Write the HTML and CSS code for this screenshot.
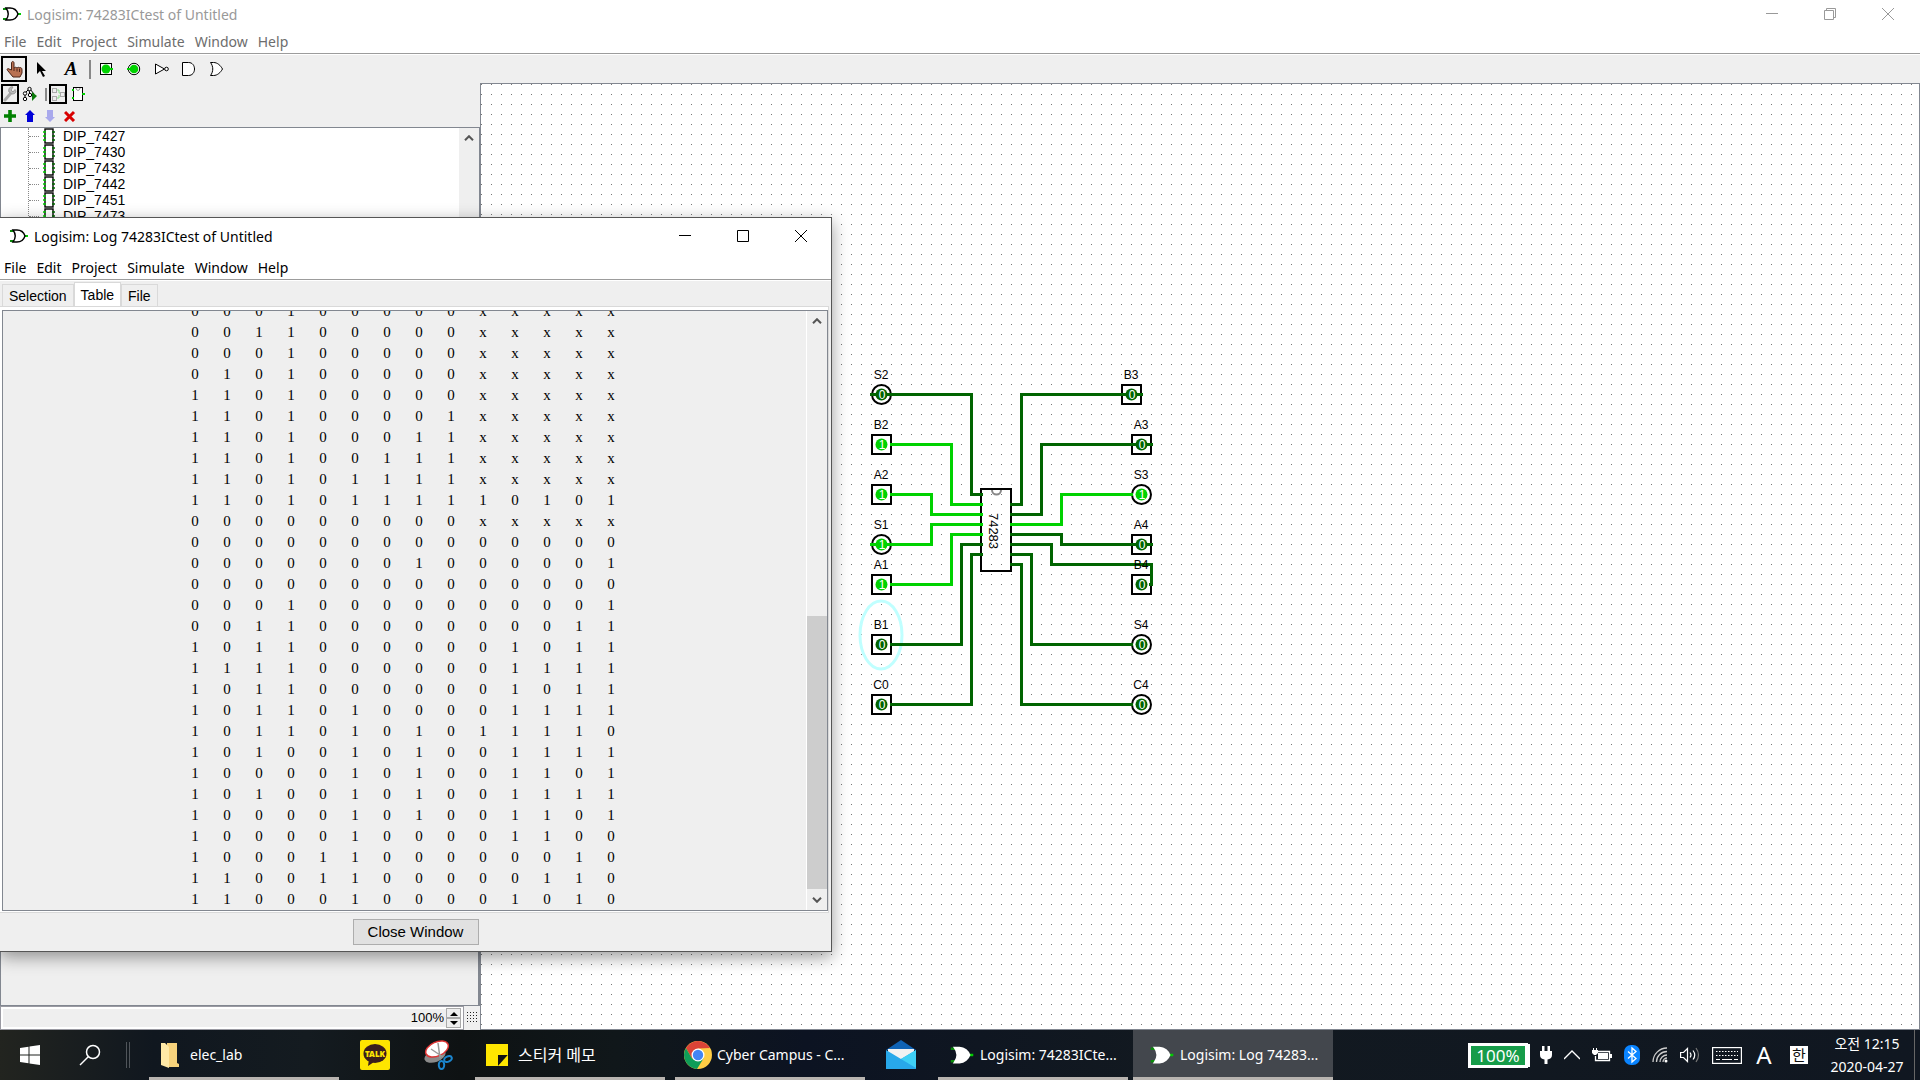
FILE: index.html
```html
<!DOCTYPE html>
<html lang="ko">
<head>
<meta charset="utf-8">
<title>Logisim: 74283ICtest of Untitled</title>
<link rel="stylesheet" href="styles.css">
</head>
<body>
<svg class="defs" aria-hidden="true">
  <defs>
    <symbol id="gate" viewBox="0 0 20 16">
      <path d="M1 3h5M1 13h5" stroke="#0a8a0a" stroke-width="2"/>
      <path d="M15 8h4" stroke="#0c0" stroke-width="2"/>
      <path d="M4 2h4c4 0 7 3 8 6-1 3-4 6-8 6H4c3-4 3-8 0-12z" fill="#fff" stroke="currentColor" stroke-width="1.4"/>
    </symbol>
    <symbol id="dip" viewBox="0 0 12 16">
      <rect x="2" y="1" width="8" height="14" fill="#fff" stroke="#000" stroke-width="1.4"/>
      <path d="M0 4h3M0 8h3M0 12h3" stroke="#0c0" stroke-width="1.4"/>
      <path d="M9 4h3M9 8h3M9 12h3" stroke="#060" stroke-width="1.4"/>
    </symbol>
    <symbol id="arrow-up" viewBox="0 0 10 6"><path d="M1 5.2l4-4 4 4" fill="none" stroke="#555" stroke-width="2"/></symbol>
  </defs>
</svg>

<div class="desktop">
  <main class="app">
    <header class="titlebar inactive">
      <svg class="gate"><use href="#gate"/></svg>
      <h1>Logisim: 74283ICtest of Untitled</h1>
      <div class="controls">
        <button aria-label="Minimize"><svg viewBox="0 0 12 12"><path d="M0 5.500h12"/></svg></button>
        <button aria-label="Restore"><svg viewBox="0 0 12 12"><path d="M.5 2.5h9v9h-9zM2.500 2.500v-2h9v9h-2"/></svg></button>
        <button aria-label="Close"><svg viewBox="0 0 12 12"><path d="M0 0l12 12M12 0L0 12"/></svg></button>
      </div>
    </header>
    <nav class="menubar inactive">
      <button>File</button><button>Edit</button><button>Project</button><button>Simulate</button><button>Window</button><button>Help</button>
    </nav>
    <div class="toolbar">
      <button class="pressed" aria-label="Poke"><svg viewBox="0 0 20 20"><path d="M7.500 11V4c0-2 2.500-2 2.500 0v5c1-1 2-1 3 0 1-1 2-1 2 0 2-1 3 0 3 2v3l-2 4H9l-5-6c-2-2 0-3 1-2z" fill="#b97152" stroke="#4a2418"/><path d="M10 9v3M13 9.500v3M15.500 10v3" stroke="#4a2418"/></svg></button>
      <button aria-label="Edit"><svg viewBox="0 0 20 20"><path d="M6 3v12l3-3 3 6 2-1-3-5h4z" fill="#000"/></svg></button>
      <button class="text-tool" aria-label="Text">A</button>
      <span class="sep"></span>
      <button aria-label="Input pin"><svg viewBox="0 0 20 20"><rect x="4.500" y="4.500" width="11" height="11" fill="#fff" stroke="#000"/><circle cx="10" cy="10" r="4.500" fill="#00d200"/><path d="M10 10h7" stroke="#00d200" stroke-width="2"/></svg></button>
      <button aria-label="Output pin"><svg viewBox="0 0 20 20"><circle cx="10" cy="10" r="5.700" fill="#fff" stroke="#000"/><circle cx="10" cy="10" r="4.300" fill="#00d200"/><path d="M3 10h7" stroke="#00d200" stroke-width="2"/></svg></button>
      <button aria-label="NOT gate"><svg viewBox="0 0 20 20"><path d="M3.500 5v10l9-5z" fill="#fff" stroke="#000"/><circle cx="14.500" cy="10" r="1.800" fill="#fff" stroke="#000"/></svg></button>
      <button aria-label="AND gate"><svg viewBox="0 0 20 20"><path d="M2.500 3.500h6c8 0 8 13 0 13h-6z" fill="#fff" stroke="#000"/></svg></button>
      <button aria-label="OR gate"><svg viewBox="0 0 20 20"><path d="M2.500 3.500h3c4 0 7 3 9 6.500-2 3.500-5 6.500-9 6.500h-3c3-4 3-9 0-13z" fill="#fff" stroke="#000"/></svg></button>
    </div>
    <div class="workspace">
      <aside class="explorer">
        <div class="toolrow">
          <button class="pressed" aria-label="Toolbox"><svg viewBox="0 0 14 16"><path d="M2 14l6-7" stroke="#aaa" stroke-width="3" stroke-linecap="round"/><path d="M12 3.500L10 6 8 4l2-3c-3-1-5 2-4 5l3 2c3 0 5-2 3-4.500z" fill="#bbb" stroke="#999"/></svg></button>
          <button aria-label="Simulation tree"><svg viewBox="0 0 16 16"><path d="M7 3L3 7v5M8 3l4 5M7 4l1 5" stroke="#000" fill="none"/><g fill="#fff" stroke="#000"><circle cx="7.500" cy="3" r="1.700"/><circle cx="3" cy="7.500" r="1.700"/><circle cx="3" cy="13" r="1.700"/><circle cx="8" cy="9" r="1.700"/></g><path d="M10 6l5 4-5 5z" fill="#0a7a0a"/></svg></button>
          <span class="sep"></span>
          <button class="pressed" aria-label="Edit layout"><svg viewBox="0 0 14 16"><path d="M5 4h3v3h2M5 12h3V9" stroke="#8d8" fill="none"/><g fill="#eee" stroke="#aaa"><rect x="1.500" y="2.500" width="4" height="4"/><rect x="1.500" y="10.500" width="4" height="4"/><rect x="9.500" y="6.500" width="4" height="4"/></g></svg></button>
          <button aria-label="Edit appearance"><svg viewBox="0 0 14 16"><rect x="2.500" y="1.500" width="9" height="13" fill="#fff" stroke="#000"/><path d="M5 2c0 3 4 3 4 0" fill="none" stroke="#888"/><path d="M1 4h2M1 12h2M11 8h3" stroke="#0c0" stroke-width="2"/></svg></button>
        </div>
        <div class="toolrow edits">
          <button aria-label="Add circuit"><svg viewBox="0 0 12 12"><path d="M6 0v12M0 6h12" stroke="#008000" stroke-width="3.600"/></svg></button>
          <button aria-label="Move up"><svg viewBox="0 0 12 12"><path d="M6 0l5 5H9v7H3V5H1z" fill="#0000d8"/></svg></button>
          <button aria-label="Move down"><svg viewBox="0 0 12 12"><path d="M6 12l5-5H9V0H3v7H1z" fill="#a8a8ec"/></svg></button>
          <button aria-label="Delete circuit"><svg viewBox="0 0 12 12"><path d="M1 2l9 9M10 2l-9 9" stroke="#d80000" stroke-width="3"/></svg></button>
        </div>
        <div class="tree">
          <ul>
            <li><svg><use href="#dip"/></svg>DIP_7427</li>
            <li><svg><use href="#dip"/></svg>DIP_7430</li>
            <li><svg><use href="#dip"/></svg>DIP_7432</li>
            <li><svg><use href="#dip"/></svg>DIP_7442</li>
            <li><svg><use href="#dip"/></svg>DIP_7451</li>
            <li><svg><use href="#dip"/></svg>DIP_7473</li>
          </ul>
          <div class="tree-scroll"><svg class="chev"><use href="#arrow-up"/></svg></div>
        </div>
        <div class="attributes"></div>
        <div class="zoom">
          <div class="zoom-box">
            <input type="text" value="100%" aria-label="Zoom">
            <div class="spin">
              <button aria-label="Zoom in"><svg viewBox="0 0 8 5"><path d="M0 5l4-4 4 4z"/></svg></button>
              <button aria-label="Zoom out"><svg viewBox="0 0 8 5"><path d="M0 0l4 4 4-4z"/></svg></button>
            </div>
          </div>
          <button class="grid-toggle" aria-label="Show grid"></button>
        </div>
      </aside>
      <section class="canvas">
        <svg class="circuit" aria-label="74283 circuit">
          <defs>
            <pattern id="dots" width="10" height="10" patternUnits="userSpaceOnUse"><rect width="1" height="1" fill="#777"/></pattern>
            <g id="sq"><rect x="-9.500" y="-9.500" width="19" height="19"/></g>
            <g id="ci"><circle r="9.500"/></g>
          </defs>
          <rect width="100%" height="100%" fill="url(#dots)"/>
          <!-- coordinates are window coordinates; the sheet starts at 481,84 -->
          <g transform="translate(-481 -84)">
            <g class="outline">
              <use href="#ci" x="881.5" y="394.5"/><use href="#sq" x="881.5" y="444.5"/><use href="#sq" x="881.5" y="494.5"/>
              <use href="#ci" x="881.5" y="544.5"/><use href="#sq" x="881.5" y="584.5"/><use href="#sq" x="881.5" y="644.5"/><use href="#sq" x="881.5" y="704.5"/>
              <use href="#sq" x="1131.5" y="394.5"/><use href="#sq" x="1141.5" y="444.5"/><use href="#ci" x="1141.5" y="494.5"/>
              <use href="#sq" x="1141.5" y="544.5"/><use href="#sq" x="1141.5" y="584.5"/><use href="#ci" x="1141.5" y="644.5"/><use href="#ci" x="1141.5" y="704.5"/>
              <rect x="981" y="489" width="30" height="82"/>
            </g>
            <path d="M992 490a4 4 0 0 0 9 0" fill="none" stroke="#888" stroke-width="2"/>
            <ellipse cx="881" cy="635" rx="21" ry="34" fill="none" stroke="#c0ffff" stroke-width="3"/>
            <g class="wire low">
              <path d="M870 394.500h101.500v100H983"/>
              <path d="M890 644.500h71.500v-100H983"/>
              <path d="M890 704.500h81.500v-150H983"/>
              <path d="M1010 504.500h11.500v-110H1143"/>
              <path d="M1010 514.500h31.500v-70H1153"/>
              <path d="M1010 534.500h51.500v10H1153"/>
              <path d="M1010 544.500h41.500v20h100v20H1149"/>
              <path d="M1010 554.500h21.500v90H1133"/>
              <path d="M1010 564.500h11.500v140H1133"/>
            </g>
            <g class="wire high">
              <path d="M890 444.500h61.500v60H983"/>
              <path d="M890 494.500h41.500v20H983"/>
              <path d="M870 544.500h61.500v-20H983"/>
              <path d="M890 584.500h61.500v-50H983"/>
              <path d="M1010 524.500h51.500v-30H1133"/>
            </g>
            <g class="value-low">
              <circle cx="881.500" cy="394.500" r="6"/><circle cx="881.500" cy="644.500" r="6"/><circle cx="881.500" cy="704.500" r="6"/>
              <circle cx="1131.500" cy="394.500" r="6"/><circle cx="1141.500" cy="444.500" r="6"/><circle cx="1141.500" cy="544.500" r="6"/>
              <circle cx="1141.500" cy="584.500" r="6"/><circle cx="1141.500" cy="644.500" r="6"/><circle cx="1141.500" cy="704.500" r="6"/>
            </g>
            <g class="value-high">
              <circle cx="881.500" cy="444.500" r="6"/><circle cx="881.500" cy="494.500" r="6"/><circle cx="881.500" cy="544.500" r="6"/><circle cx="881.500" cy="584.500" r="6"/><circle cx="1141.500" cy="494.500" r="6"/>
            </g>
            <g class="digit">
              <text x="882" y="399">0</text><text x="882" y="449">1</text><text x="882" y="499">1</text><text x="882" y="549">1</text><text x="882" y="589">1</text><text x="882" y="649">0</text><text x="882" y="709">0</text>
              <text x="1132" y="399">0</text><text x="1142" y="449">0</text><text x="1142" y="499">1</text><text x="1142" y="549">0</text><text x="1142" y="589">0</text><text x="1142" y="649">0</text><text x="1142" y="709">0</text>
            </g>
            <g class="label">
              <text x="881" y="379">S2</text><text x="881" y="429">B2</text><text x="881" y="479">A2</text><text x="881" y="529">S1</text><text x="881" y="569">A1</text><text x="881" y="629">B1</text><text x="881" y="689">C0</text>
              <text x="1131" y="379">B3</text><text x="1141" y="429">A3</text><text x="1141" y="479">S3</text><text x="1141" y="529">A4</text><text x="1141" y="569">B4</text><text x="1141" y="629">S4</text><text x="1141" y="689">C4</text>
              <text class="chip-name" transform="translate(989 531) rotate(90)">74283</text>
            </g>
          </g>
        </svg>
      </section>
    </div>
  </main>

  <section class="log">
    <header class="titlebar">
      <svg class="gate"><use href="#gate"/></svg>
      <h2>Logisim: Log 74283ICtest of Untitled</h2>
      <div class="controls">
        <button aria-label="Minimize"><svg viewBox="0 0 12 12"><path d="M0 5.500h12"/></svg></button>
        <button aria-label="Maximize"><svg viewBox="0 0 12 12"><path d="M.5.5h11v11H.5z"/></svg></button>
        <button aria-label="Close"><svg viewBox="0 0 12 12"><path d="M0 0l12 12M12 0L0 12"/></svg></button>
      </div>
    </header>
    <nav class="menubar">
      <button>File</button><button>Edit</button><button>Project</button><button>Simulate</button><button>Window</button><button>Help</button>
    </nav>
    <div class="tabs" role="tablist">
      <button role="tab">Selection</button><button role="tab" class="current" aria-selected="true">Table</button><button role="tab">File</button>
    </div>
    <div class="pane">
      <div class="scrollpane">
        <div class="viewport"><table><tbody id="log-rows"></tbody></table></div>
        <div class="scrollbar">
          <svg class="chev"><use href="#arrow-up"/></svg>
          <div class="track"><div class="thumb"></div></div>
          <svg class="chev down"><use href="#arrow-up"/></svg>
        </div>
      </div>
    </div>
    <footer><button>Close Window</button></footer>
  </section>

  <footer class="taskbar">
    <button class="start" aria-label="Start"><svg width="20" height="20" viewBox="0 0 20 20"><path d="M0 3l8.500-1.200v7.700H0zM9.500 1.600L20 0v9.500H9.500zM0 10.500h8.500v7.700L0 17zM9.500 10.500H20V20L9.500 18.400z" fill="#fff"/></svg></button>
    <button class="start" aria-label="Search"><svg width="22" height="22" viewBox="0 0 22 22" fill="none" stroke="#fff" stroke-width="1.500"><circle cx="14" cy="8" r="6.500"/><path d="M9.500 12.500L1 21"/></svg></button>
    <span class="grip"></span>
    <button class="task"><svg width="20" height="28" viewBox="0 0 20 28"><path d="M7 2h10v20l2 1v3H7z" fill="#f7d37c"/><path d="M1 2h4l4 4v21l-8-3z" fill="#ffe9a6"/></svg><span>elec_lab</span></button>
    <button class="pin" aria-label="KakaoTalk"><svg width="30" height="30" viewBox="0 0 30 30"><rect width="30" height="30" rx="2" fill="#fee500"/><ellipse cx="15" cy="13.500" rx="11.500" ry="9.500" fill="#3a1d1d"/><path d="M9 19l-1 7 6-4z" fill="#3a1d1d"/><text x="15" y="17" text-anchor="middle" font-family="Noto Sans, sans-serif" font-weight="900" font-size="8" fill="#fee500">TALK</text></svg></button>
    <button class="pin" aria-label="Snipping Tool"><svg width="30" height="30" viewBox="0 0 30 30"><ellipse cx="12" cy="16" rx="11" ry="6" transform="rotate(-20 12 16)" fill="#8b8b8b"/><ellipse cx="14" cy="9" rx="12" ry="7" transform="rotate(-24 14 9)" fill="#fff" stroke="#d33" stroke-width="1.500"/><path d="M15 3l2 15M8 9l12 8" stroke="#999" stroke-width="1.500"/><g fill="none" stroke="#1b86cf" stroke-width="2"><ellipse cx="25" cy="19" rx="4" ry="2.700" transform="rotate(-25 25 19)"/><ellipse cx="18.500" cy="25" rx="2.700" ry="4"/></g></svg></button>
    <button class="task"><svg width="22" height="24" viewBox="0 0 22 24"><path d="M0 1h22v12L12 23H0z" fill="#ffe600"/><path d="M12 23V12h10z" fill="#111"/><path d="M12 23l10-11v11z" fill="#ffe600"/></svg><span class="hangul">스티커 메모</span></button>
    <button class="task chrome"><svg width="28" height="28" viewBox="0 0 28 28"><circle cx="14" cy="14" r="14" fill="#ffcd45"/><path d="M1.900 7A14 14 0 0 1 26.100 7L14 7.500l-6 10z" fill="#db4437"/><path d="M1.900 7A14 14 0 0 0 13 28l6.500-10.500H8z" fill="#0f9d58"/><circle cx="14" cy="14" r="6.500" fill="#fff"/><circle cx="14" cy="14" r="5.200" fill="#4285f4"/></svg><span>Cyber Campus - C...</span></button>
    <button class="pin" aria-label="Mail"><svg width="30" height="30" viewBox="0 0 30 30"><path d="M0 10L15 0l15 10z" fill="#0f63b5"/><path d="M2 9h26v10H2z" fill="#f2f2f2"/><path d="M0 10l15 9 15-9v19H0z" fill="#28a8ea"/><path d="M30 10l-15 9 15 9z" fill="#3fd0f5"/></svg></button>
    <div class="group">
      <button class="task"><svg class="gate" width="26" height="20"><use href="#gate"/></svg><span>Logisim: 74283ICte...</span></button>
      <button class="task active"><svg class="gate" width="26" height="20"><use href="#gate"/></svg><span>Logisim: Log 74283...</span></button>
    </div>
    <div class="tray">
      <span class="battery">100%</span>
      <svg width="12" height="20" viewBox="0 0 12 20"><path d="M2 1h2.500v5h3V1H10v5h2v4c0 3-2 4-4.500 4.500V19h-3v-4.500C2 14 0 13 0 10V6h2z" fill="#fff"/></svg>
      <svg width="16" height="10" viewBox="0 0 16 10"><path d="M0 9l8-8 8 8" fill="none" stroke="#fff" stroke-width="1.300"/></svg>
      <svg width="20" height="14" viewBox="0 0 20 14"><path d="M5.500 3.500h12v9h-14V8" fill="none" stroke="#fff" stroke-width="1.300"/><path d="M6 5h10v6H6zM18 6h2v4h-2zM0 2h6v3l-2 2H2L0 5zM1 0h1v2H1zM4 0h1v2H4z" fill="#fff"/></svg>
      <svg width="16" height="20" viewBox="0 0 16 20"><rect width="16" height="20" rx="7" fill="#0a84ff"/><path d="M4 6.500l8 7-4 3.500V3l4 3.500-8 7" fill="none" stroke="#fff" stroke-width="1.300"/></svg>
      <svg width="16" height="16" viewBox="0 0 16 16"><g fill="none" stroke="#ccc" stroke-width="1.300"><path d="M1 15A14 14 0 0 1 15 1M4.500 15A10.500 10.500 0 0 1 15 4.500M8 15a7 7 0 0 1 7-7M11 15a4 4 0 0 1 4-4"/></g><circle cx="14" cy="14" r="1.500" fill="#fff"/></svg>
      <svg width="20" height="16" viewBox="0 0 20 16"><g fill="none" stroke="#fff" stroke-width="1.200"><path d="M.6 5.500h2.900l4-4v13l-4-4H.6zM10 5.500q2 2.500 0 5M13 3.500q3.500 4.500 0 9"/><path d="M16 1q5 7 0 14" stroke="#777"/></g></svg>
      <svg width="30" height="17" viewBox="0 0 30 17"><rect x=".6" y=".6" width="28.800" height="15.800" fill="none" stroke="#fff" stroke-width="1.200"/><path d="M4 4.500h22M4 8.500h22" stroke="#fff" stroke-dasharray="1.500 1.500"/><path d="M4 12.500h4M10 12.500h10M22 12.500h4" stroke="#fff"/></svg>
      <span class="ime">A</span>
      <span class="han">한</span>
      <div class="clock"><span>오전 12:15</span><span>2020-04-27</span></div>
      <span class="peek"></span>
    </div>
  </footer>
</div>
<script src="app.js"></script>
</body>
</html>
```
FILE: styles.css
```css
* { box-sizing: border-box; }
body { margin: 0; font: 14px/20px "Noto Sans", "Noto Sans CJK KR", sans-serif; color: #000; background: #fff; }
button { font: inherit; color: inherit; border: 0; padding: 0; margin: 0; background: none; white-space: nowrap; }
svg { display: block; flex: none; }
.defs { position: absolute; width: 0; height: 0; }
.desktop { position: relative; display: grid; grid-template-rows: minmax(0, 1fr) 50px; height: 100vh; overflow: hidden; }

/* shared window chrome */
.app { display: flex; flex-direction: column; min-width: 0; min-height: 0; }
.titlebar { display: flex; align-items: center; height: 28px; padding-left: 2px; background: #fff; }
.titlebar .gate { width: 20px; height: 16px; }
.titlebar h1, .titlebar h2 { margin: 0 0 0 5px; padding-top: 2px; font-size: 14px; font-weight: 400; }
.titlebar.inactive { color: #999; }
.titlebar .gate { color: #000; }
.controls { display: flex; margin-left: auto; padding-right: 1px; }
.controls button { display: grid; place-items: center; width: 58px; height: 24px; }
.controls svg { width: 12px; height: 12px; fill: none; stroke: currentColor; }
.app .controls { padding-right: 3px; }
.menubar { display: flex; align-items: center; gap: 10px; height: 26px; padding: 2px 0 0 4px; background: #fff; border-bottom: 1px solid #9c9c9c; }
.menubar.inactive { color: #6d6d6d; }

/* main toolbar */
.toolbar { display: flex; align-items: center; height: 29px; padding: 1px 0 1px 1px; background: #efefef; border-top: 1px solid #fff; }
.toolbar button { display: grid; place-items: center; width: 28px; height: 26px; }
.toolbar svg { width: 20px; height: 20px; }
.toolbar .pressed { width: 26px; border: 2px solid #000; }
.toolbar .text-tool { padding-left: 4px; font: italic 700 19px/20px "Liberation Serif", serif; }
.sep { width: 2px; height: 19px; margin: 0 1px 0 6px; background: #888; }

.workspace { display: flex; flex: 1; min-height: 0; }
.explorer { display: flex; flex-direction: column; width: 480px; background: #efefef; font-family: "Liberation Sans", sans-serif; }
.toolrow { display: flex; align-items: center; height: 22px; padding-left: 1px; }
.toolrow button { display: grid; place-items: center; width: 18px; height: 20px; }
.toolrow svg { width: 14px; height: 16px; }
.toolrow .pressed { border: 2px solid #000; }
.toolrow button:nth-child(2) { width: 22px; }
.toolrow button:nth-child(2) svg { width: 16px; }
.toolrow .sep { height: 13px; margin: 0 2px 0 4px; }
.toolrow button:last-child { width: 22px; }
.toolrow.edits { padding-left: 0; }
.toolrow.edits button, .toolrow.edits button:nth-child(2) { width: 20px; }
.toolrow.edits svg, .toolrow.edits button:nth-child(2) svg { width: 12px; height: 12px; }
.tree { display: flex; height: 420px; border: 1px solid #828790; background: #fff; overflow: hidden; }
.tree ul { flex: 1; margin: 0 0 0 27px; padding: 0; list-style: none; border-left: 1px dotted #888; font-size: 14px; line-height: 16px; }
.tree li { display: flex; align-items: center; height: 16px; }
.tree li::before { content: ""; width: 10px; margin-right: 4px; border-top: 1px dotted #888; }
.tree li svg { width: 12px; height: 16px; margin-right: 8px; }
.tree-scroll { width: 20px; padding-top: 7px; background: #efefef; }
.chev { width: 10px; height: 6px; margin: 0 auto; }
.down { transform: rotate(180deg); }
.attributes { flex: 1; margin-top: 3px; border: 1px solid #828790; border-right-width: 2px; }
.zoom { display: flex; height: 24px; }
.zoom-box { display: flex; align-items: center; flex: 1; padding: 0 2px; border: 1px solid #9a9aa2; box-shadow: inset 0 0 0 2px #fff; }
.zoom-box input { flex: 1; min-width: 0; height: 18px; padding: 0 2px; border: 0; background: #efefef; font: 13px/18px "Liberation Sans", sans-serif; text-align: right; }
.spin { display: flex; flex-direction: column; width: 15px; }
.spin button { display: grid; place-items: center; height: 10px; border: 1px solid #aaa; background: #eee; }
.spin svg { width: 8px; height: 5px; }
.grid-toggle { width: 11px; height: 12px; margin: 6px 2px 0 3px; background: conic-gradient(from 270deg at 1px 1px, #222 90deg, transparent 0) 0 0 / 3px 3px; }

.canvas { flex: 1; min-width: 0; border: 1px solid #828790; background: #fff; }
.circuit { width: 100%; height: 100%; }
.outline { fill: none; stroke: #000; stroke-width: 2; }
.wire { fill: none; stroke-width: 3; }
.low { stroke: #006400; }
.high { stroke: #00d200; }
.value-low { fill: #006400; }
.value-high { fill: #00d200; }
.digit { fill: #fff; font: 12px "Liberation Sans", sans-serif; text-anchor: middle; }
.label { font: 12px "Liberation Sans", sans-serif; text-anchor: middle; }
.chip-name { font-size: 13px; }

/* log window */
.log { position: absolute; left: 0; top: 217px; bottom: 128px; width: 832px; max-width: 100%; display: flex; flex-direction: column; background: #efefef; border: 1px solid #555; border-left: 0; box-shadow: 0 5px 16px rgba(0, 0, 0, .4); }
.log .titlebar { height: 36px; padding-left: 9px; }
.tabs { display: flex; align-items: flex-end; height: 26px; padding-left: 2px; border-top: 1px solid #fff; font: 14px/20px "Liberation Sans", sans-serif; }
.tabs button { height: 22px; padding: 0 6px; border: 1px solid #d9d9d9; border-bottom: 0; }
.tabs .current { height: 24px; background: #fff; }
.pane { flex: 1; min-height: 0; display: flex; margin-right: 2px; padding: 3px 0 1px 2px; background: #fff; border: 1px solid #d9d9d9; border-left: 0; }
.scrollpane { flex: 1; display: flex; border: 1px solid #828790; background: #efefef; }
.viewport { flex: 1; display: flex; flex-direction: column; justify-content: flex-end; align-items: center; padding-right: 3px; overflow: hidden; }
.log table { border-collapse: collapse; table-layout: fixed; width: 448px; font: 15px/21px "Liberation Serif", serif; text-align: center; }
.log td { height: 21px; padding: 0; }
.scrollbar { display: flex; flex-direction: column; width: 21px; padding: 7px 0; border-left: 1px solid #fff; }
.track { flex: 1; display: flex; flex-direction: column; justify-content: flex-end; padding: 8px 0; }
.thumb { height: 49%; background: #cdcdcd; }
.log footer { display: flex; justify-content: center; align-items: center; height: 38px; padding-bottom: 1px; }
.log footer button { width: 126px; height: 26px; border: 1px solid #adadad; background: #e1e1e1; font: 15px/20px "Liberation Sans", sans-serif; }

/* taskbar */
.taskbar { display: flex; color: #fff; background: linear-gradient(90deg, #22241f, #10171f 8%, #141b20 16%, #0e1213 24%, #10171a 32%, #0c1322 42%, #121920 60%, #101721); }
.taskbar button { display: flex; align-items: center; }
.taskbar .start { width: 60px; justify-content: center; }
.grip { width: 4px; height: 26px; margin: 12px 14px 0 6px; border: 1px solid #50555a; border-width: 0 1px; }
.taskbar .task { width: 190px; margin: 0 5px; padding: 3px 8px 0 11px; gap: 10px; border-bottom: 3px solid #b8b4b0; }
.taskbar .chrome { padding-left: 9px; gap: 5px; }
.taskbar .pin { width: 63px; padding-right: 1px; justify-content: center; }
.hangul { font-size: 16px; }
.group { display: flex; gap: 5px; margin: 0 5px; }
.taskbar .group .task { margin: 0; gap: 5px; }
.taskbar .group .active { width: 200px; padding-left: 16px; background: #43474d; }
.task .gate { color: #fff; }
.tray { display: flex; align-items: center; margin-left: auto; }
.tray svg { margin-right: 12px; }
.battery { width: 60px; height: 25px; margin-right: 12px; border: 3px solid #fff; background: #169c49; font-size: 17px; line-height: 19px; text-align: center; box-shadow: 3px 0 0 -1px #fff; }
.ime { width: 20px; margin-right: 16px; font-size: 24px; line-height: 30px; text-align: center; }
.han { width: 18px; height: 18px; margin-right: 20px; background: #fff; color: #111; font-size: 15px; line-height: 18px; text-align: center; }
.clock { display: flex; flex-direction: column; width: 78px; font-size: 14px; line-height: 23px; text-align: center; }
.peek { width: 6px; height: 50px; margin-left: 8px; border-left: 1px solid #666; }
```
FILE: app.js
```js
// Logged samples, oldest first; one character per column.
const samples = `
000100000xxxxx
001100000xxxxx
000100000xxxxx
010100000xxxxx
110100000xxxxx
110100001xxxxx
110100011xxxxx
110100111xxxxx
110101111xxxxx
11010111110101
000000000xxxxx
00000000000000
00000001000001
00000000000000
00010000000001
00110000000011
10110000001011
11110000001111
10110000001011
10110100001111
10110101011110
10100101001111
10000101001101
10100101001111
10000101001101
10000100001100
10001100000010
11001100000110
11000100001010`.trim().split("\n");

const body = document.getElementById("log-rows");
for (const sample of samples) {
  const row = body.insertRow();
  for (const value of sample) row.insertCell().textContent = value;
}
```
